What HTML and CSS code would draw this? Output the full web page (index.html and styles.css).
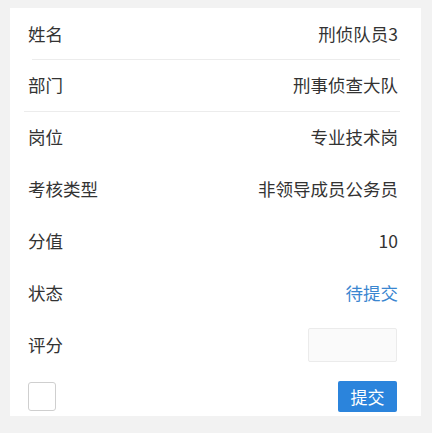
FILE: index.html
```html
<!DOCTYPE html>
<html lang="zh-CN">
<head>
<meta charset="utf-8">
<link rel="stylesheet" href="styles.css">
</head>
<body>
<div class="card">
  <div class="row"><span class="label">姓名</span><span class="value">刑侦队员3</span></div>
  <div class="divider d1"></div>
  <div class="row"><span class="label">部门</span><span class="value">刑事侦查大队</span></div>
  <div class="divider d2"></div>
  <div class="row"><span class="label">岗位</span><span class="value">专业技术岗</span></div>
  <div class="row"><span class="label">考核类型</span><span class="value">非领导成员公务员</span></div>
  <div class="row"><span class="label">分值</span><span class="value">10</span></div>
  <div class="row"><span class="label">状态</span><span class="value status">待提交</span></div>
  <div class="row"><span class="label">评分</span><input class="score" type="text"></div>
  <div class="footer">
    <span class="check"></span>
    <button class="submit" type="button">提交</button>
  </div>
</div>
</body>
</html>
```
FILE: styles.css
```css
html, body {
  margin: 0;
  padding: 0;
  background: #f2f2f2;
}
body {
  padding: 8px 11px 0 10px;
  font-family: "Noto Sans CJK SC", "Noto Sans", sans-serif;
  color: #333;
}
.card {
  background: #fff;
  height: 408px;
  display: flex;
  flex-direction: column;
}
.row {
  height: 51px;
  box-sizing: border-box;
  flex: none;
  display: flex;
  align-items: center;
  justify-content: space-between;
  padding: 0 23px 1px 18px;
  font-size: 17.5px;
  line-height: 1;
}
.row + .row {
  height: 52px;
}
.row:first-child {
  padding-bottom: 0;
}
.divider {
  height: 1px;
  background: #ececec;
  margin-right: 21px;
}
.d1 { margin-left: 22px; }
.d2 { margin-left: 14px; }
.status {
  color: #3a86d0;
}
.score {
  width: 89px;
  height: 34px;
  box-sizing: border-box;
  border: 1px solid #ebebeb;
  background: #fafafa;
  border-radius: 2px;
  margin: 0 1px 0 0;
  padding: 0;
}
.footer {
  display: flex;
  justify-content: space-between;
  align-items: flex-start;
  padding: 10px 24px 0 18px;
}
.check {
  width: 28px;
  height: 29px;
  box-sizing: border-box;
  border: 1px solid #cfcfcf;
  border-radius: 3px;
  background: #fff;
  margin-top: 1px;
}
.submit {
  width: 59px;
  height: 31px;
  border: none;
  border-radius: 2px;
  background: #2b84dc;
  color: #fff;
  font-family: "Noto Sans CJK SC", "Noto Sans", sans-serif;
  font-size: 17px;
  padding: 0;
  line-height: 31px;
}
```
